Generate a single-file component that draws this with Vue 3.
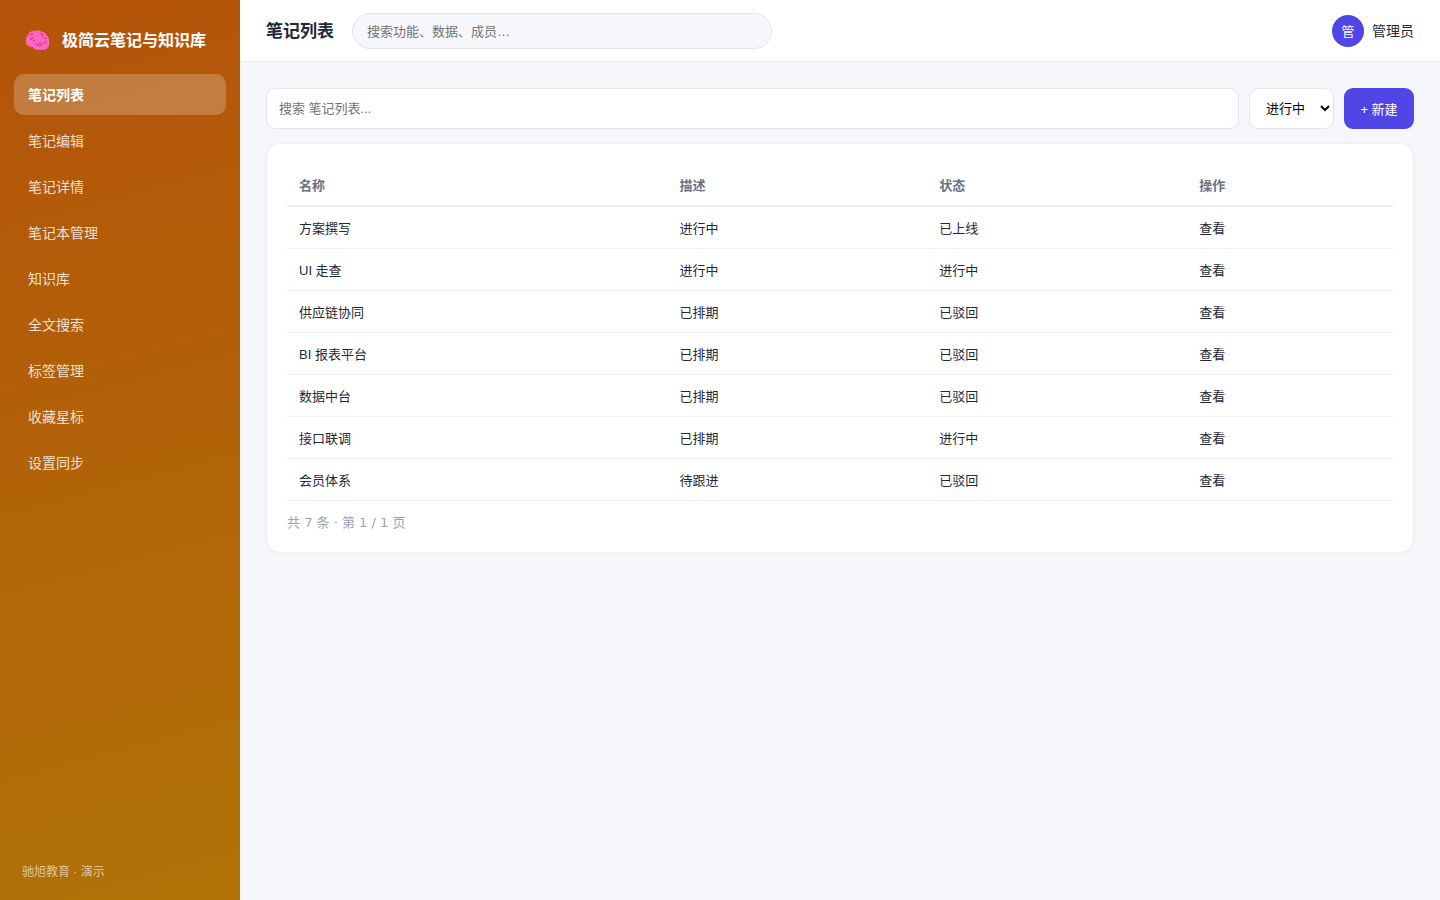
<script setup>
import { ref } from 'vue'

const navItems = ['笔记列表', '笔记编辑', '笔记详情', '笔记本管理', '知识库', '全文搜索', '标签管理', '收藏星标', '设置同步']
const active = ref('笔记列表')
const globalQuery = ref('')
const listQuery = ref('')
const status = ref('进行中')
const statuses = ['进行中', '已上线', '已驳回', '已排期', '待跟进']
const rows = [
  { name: '方案撰写', desc: '进行中', state: '已上线' },
  { name: 'UI 走查', desc: '进行中', state: '进行中' },
  { name: '供应链协同', desc: '已排期', state: '已驳回' },
  { name: 'BI 报表平台', desc: '已排期', state: '已驳回' },
  { name: '数据中台', desc: '已排期', state: '已驳回' },
  { name: '接口联调', desc: '已排期', state: '进行中' },
  { name: '会员体系', desc: '待跟进', state: '已驳回' },
]
</script>

<template>
  <div class="app">
    <aside class="sidebar">
      <div class="brand">
        <svg class="logo" viewBox="0 0 25 24" aria-hidden="true">
          <path d="M14.300 19h5.400l-1.200 1.800.3 2.500-2.300-.8-1.200-2z" fill="#f5108f" />
          <path d="M1 13.500C.6 10.500 1.200 7.500 3 6c.8-2.500 3-4 5.500-4 2-1 5-1.200 7 .2C18.500 2.500 21 4 21.800 6.500c1.800 1.500 2.700 4.300 2.400 6.500.3 3-1 6-3.200 7.200-2 .8-4.500.8-6.500.5-2.500.3-5.500-.2-7-2.700C4.500 18 1.600 16.500 1 13.500z" fill="#ff68bd" />
          <path d="M4.300 6.500l1.700-1.500h2M11.500 2.300l1.200 1.400M15.500 4.500l2.300 1-.8 2.300M5 10.800l2-1.600 1.600-.2M8 12l2-.7M10.800 15l2.700 1.300 2.500.3 1.500-1.800M14 13.800l2 .4M18.500 14.500l1.500-.8 1.800-1.900M19.500 9.500l2-.4" fill="none" stroke="#f5108f" />
        </svg>
        <span>极简云笔记与知识库</span>
      </div>
      <nav class="nav">
        <a
          v-for="item in navItems"
          :key="item"
          href="#"
          class="nav-link"
          :class="{ active: item === active }"
          @click.prevent="active = item"
        >{{ item }}</a>
      </nav>
      <div class="foot">驰旭教育 · 演示</div>
    </aside>

    <div class="main">
      <header class="topbar">
        <h1 class="title">笔记列表</h1>
        <input v-model="globalQuery" class="global-search" type="text" aria-label="全局搜索" placeholder="搜索功能、数据、成员…" />
        <div class="user">
          <span class="avatar">管</span>
          <span>管理员</span>
        </div>
      </header>

      <main class="content">
        <div class="toolbar">
          <input v-model="listQuery" class="field list-search" type="text" aria-label="搜索笔记列表" placeholder="搜索 笔记列表..." />
          <select v-model="status" class="field status" aria-label="状态">
            <option v-for="s in statuses" :key="s">{{ s }}</option>
          </select>
          <button class="create" type="button">+ 新建</button>
        </div>

        <section class="card">
          <table class="table">
            <colgroup>
              <col class="col-name" />
              <col class="col-mid" />
              <col class="col-mid" />
              <col />
            </colgroup>
            <thead>
              <tr><th>名称</th><th>描述</th><th>状态</th><th>操作</th></tr>
            </thead>
            <tbody>
              <tr v-for="row in rows" :key="row.name">
                <td>{{ row.name }}</td>
                <td>{{ row.desc }}</td>
                <td>{{ row.state }}</td>
                <td>查看</td>
              </tr>
            </tbody>
          </table>
          <div class="pager">共 {{ rows.length }} 条 · 第 1 / 1 页</div>
        </section>
      </main>
    </div>
  </div>
</template>

<style>
body {
  margin: 0;
  background: #f5f7fb;
}
</style>

<style scoped>
.app {
  display: flex;
  min-height: 100vh;
  font-family: "Liberation Sans", "Noto Sans CJK SC", sans-serif;
  font-size: 14px;
  line-height: 21px;
  color: #1f2937;
}
.app *,
.app {
  box-sizing: border-box;
}
input,
select,
button {
  font-family: inherit;
}
.sidebar {
  display: flex;
  flex-direction: column;
  flex: 0 0 240px;
  padding: 22px 14px 17px;
  color: #fff;
  background: linear-gradient(165deg, #b45309, #b07207);
}
.brand {
  display: flex;
  align-items: center;
  gap: 12px;
  padding: 5px 11px 19px;
  font-size: 16px;
  line-height: 28px;
  font-weight: 700;
  white-space: nowrap;
}
.logo {
  width: 25px;
  height: 24px;
  flex: none;
}
.nav {
  display: flex;
  flex-direction: column;
  gap: 5px;
}
.nav-link {
  padding: 11px 14px 9px;
  border-radius: 10px;
  color: rgba(255, 255, 255, 0.82);
  text-decoration: none;
}
.nav-link.active {
  background: rgba(255, 255, 255, 0.22);
  color: #fff;
  font-weight: 700;
}
.foot {
  margin-top: auto;
  padding: 0 8px;
  font-size: 12px;
  color: rgba(255, 255, 255, 0.6);
}
.main {
  flex: 1;
  min-width: 0;
  display: flex;
  flex-direction: column;
}
.topbar {
  display: flex;
  align-items: center;
  gap: 18px;
  padding: 13px 26px 12px;
  background: #fff;
  border-bottom: 1px solid #eceef4;
}
.title {
  margin: 0;
  padding-top: 2px;
  font-size: 17px;
  line-height: 24px;
  font-weight: 700;
}
.global-search {
  flex: 0 1 420px;
  height: 36px;
  padding: 0 14px;
  border: 1px solid #e3e5ee;
  border-radius: 18px;
  background: #f5f7fb;
  font-size: 13px;
  outline: none;
}
.user {
  display: flex;
  align-items: center;
  gap: 8px;
  margin-left: auto;
}
.avatar {
  display: grid;
  place-items: center;
  width: 32px;
  height: 32px;
  border-radius: 50%;
  background: #4f46e5;
  color: #fff;
  font-size: 13px;
}
.content {
  padding: 26px;
}
.toolbar {
  display: flex;
  gap: 10px;
  height: 41px;
  margin-bottom: 14px;
}
.field {
  border: 1px solid #e3e5ee;
  border-radius: 9px;
  background-color: #fff;
  font-size: 13px;
  outline: none;
}
.list-search {
  flex: 1;
  min-width: 0;
  padding: 0 12px;
}
.status {
  width: 85px;
  padding: 0 0 0 12px;
  color: #000;
}
.create {
  width: 70px;
  padding: 0;
  border: 0;
  border-radius: 9px;
  background: #4f46e5;
  color: #fff;
  font-size: 13px;
}
.card {
  padding: 20px;
  border: 1px solid #eef0f5;
  border-radius: 14px;
  background: #fff;
  box-shadow: 0 1px 4px rgba(31, 41, 55, 0.04);
}
.table {
  width: 100%;
  border-collapse: separate;
  border-spacing: 0;
  table-layout: fixed;
  font-size: 13px;
}
.col-name {
  width: 34.4%;
}
.col-mid {
  width: 23.5%;
}
th,
td {
  padding: 11px 12px 9px;
  text-align: left;
}
th {
  border-bottom: 2px solid #eef0f5;
  color: #6b7280;
  font-weight: 700;
}
td {
  border-bottom: 1px solid #eef0f2;
}
.pager {
  padding-top: 12px;
  font-family: "DejaVu Sans", "Noto Sans CJK SC", sans-serif;
  font-size: 13px;
  line-height: 19px;
  color: #9ca3b5;
}
</style>
